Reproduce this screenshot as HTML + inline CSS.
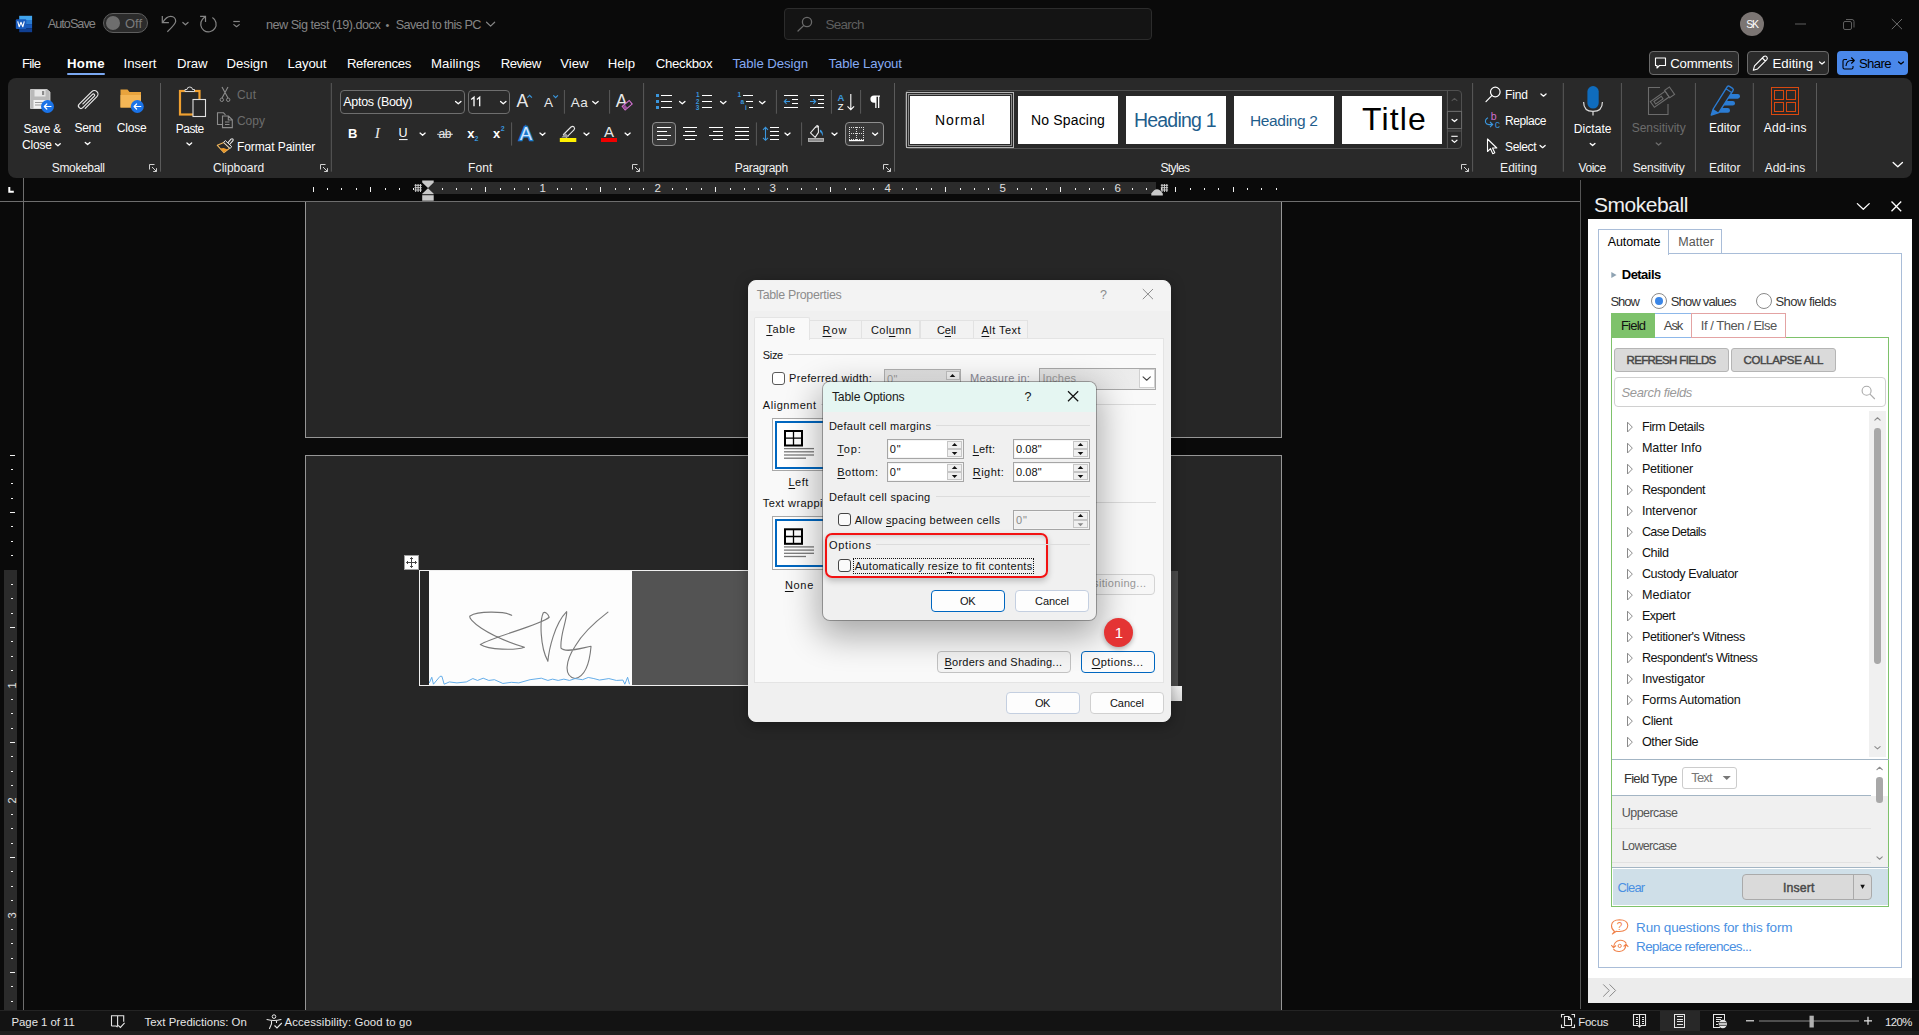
<!DOCTYPE html>
<html><head><meta charset="utf-8"><title>Word</title>
<style>
*{box-sizing:border-box;margin:0;padding:0}
html,body{width:1919px;height:1035px;overflow:hidden;background:#0a0a0a}
body{position:relative;font-family:"Liberation Sans",sans-serif;font-size:13px;color:#fff}
.a{position:absolute}
.t{position:absolute;white-space:nowrap;line-height:1}
svg{overflow:visible}
u{text-decoration-thickness:1px;text-underline-offset:1.5px}
</style></head><body>
<div class="a" style="left:305px;top:201px;width:977px;height:237px;background:#262626;border:1px solid #969696"></div>
<div class="a" style="left:305px;top:455px;width:977px;height:556px;background:#262626;border:1px solid #969696;border-bottom:0"></div>
<div class="a" style="left:428px;top:182px;width:728.3px;height:12px;background:#2b2b2b"></div>
<div class="a" style="left:4px;top:570px;width:13px;height:440px;background:#2b2b2b"></div>
<div class="a" style="left:0px;top:201px;width:1581px;height:1px;background:#6e6e6e"></div>
<div class="a" style="left:23px;top:178px;width:1px;height:832px;background:#6e6e6e"></div>
<div class="a" style="left:1580.3px;top:180px;width:1px;height:829px;background:#555"></div>
<div class="t" style="left:539.50px;top:183.30px;font-size:11.5px;color:#e0e0e0;letter-spacing:0.000px;">1</div>
<div class="t" style="left:654.50px;top:183.30px;font-size:11.5px;color:#e0e0e0;letter-spacing:0.000px;">2</div>
<div class="t" style="left:769.50px;top:183.30px;font-size:11.5px;color:#e0e0e0;letter-spacing:0.000px;">3</div>
<div class="t" style="left:884.50px;top:183.30px;font-size:11.5px;color:#e0e0e0;letter-spacing:0.000px;">4</div>
<div class="t" style="left:999.50px;top:183.30px;font-size:11.5px;color:#e0e0e0;letter-spacing:0.000px;">5</div>
<div class="t" style="left:1114.50px;top:183.30px;font-size:11.5px;color:#e0e0e0;letter-spacing:0.000px;">6</div>
<div class="t" style="left:6px;top:679.5px;width:13px;height:11px;font-size:11px;color:#e0e0e0;transform:rotate(-90deg);text-align:center;line-height:11px">1</div>
<div class="t" style="left:6px;top:794.5px;width:13px;height:11px;font-size:11px;color:#e0e0e0;transform:rotate(-90deg);text-align:center;line-height:11px">2</div>
<div class="t" style="left:6px;top:909.5px;width:13px;height:11px;font-size:11px;color:#e0e0e0;transform:rotate(-90deg);text-align:center;line-height:11px">3</div>
<div class="a" style="left:419px;top:570px;width:759.3px;height:116px;border:1px solid #f0f0f0;border-right:0;background:#535353"></div>
<div class="a" style="left:420px;top:571px;width:9px;height:114px;background:#262626"></div>
<div class="a" style="left:429px;top:571px;width:203px;height:114px;background:#fdfdfd"></div>
<div class="a" style="left:1171px;top:570px;width:8.2px;height:1px;background:#262626"></div>
<div class="a" style="left:1171px;top:571px;width:7.2px;height:115px;background:#4c4c4c"></div>
<div class="a" style="left:1171.4px;top:686px;width:10.4px;height:14.6px;background:linear-gradient(#f4f4f4,#dcdcdc)"></div>
<div class="a" style="left:404px;top:555px;width:15px;height:15px;background:#fff;border:1px solid #a0a0a0"></div>
<div class="a" style="left:0px;top:1009.5px;width:1919px;height:25.5px;background:#131313;border-top:1px solid #242424"></div>
<div class="a" style="left:0px;top:1031px;width:1919px;height:4px;background:#1f1f1f"></div>
<div class="a" style="left:1660px;top:1010.5px;width:40px;height:20.5px;background:#282828"></div>
<div class="t" style="left:11.50px;top:1016.70px;font-size:11.4px;color:#e6e6e6;letter-spacing:-0.042px;">Page 1 of 11</div>
<div class="t" style="left:144.50px;top:1016.70px;font-size:11.4px;color:#e6e6e6;letter-spacing:0.019px;">Text Predictions: On</div>
<div class="t" style="left:284.50px;top:1016.70px;font-size:11.4px;color:#e6e6e6;letter-spacing:0.107px;">Accessibility: Good to go</div>
<div class="t" style="left:1578.20px;top:1016.70px;font-size:11.4px;color:#e6e6e6;letter-spacing:-0.183px;">Focus</div>
<div class="t" style="left:1885.10px;top:1016.70px;font-size:11.4px;color:#e6e6e6;letter-spacing:-0.580px;">120%</div>
<svg class="a" width="1919" height="1035" style="left:0;top:0" fill="none"><path d="M9.3 187 V191.8 H13.8" stroke="#fff" stroke-width="2"/><rect x="327" y="188" width="1" height="2" fill="#f0f0f0"/><rect x="341" y="188" width="1" height="2" fill="#f0f0f0"/><rect x="356" y="188" width="1" height="2" fill="#f0f0f0"/><rect x="370" y="187" width="1" height="5" fill="#f0f0f0"/><rect x="385" y="188" width="1" height="2" fill="#f0f0f0"/><rect x="399" y="188" width="1" height="2" fill="#f0f0f0"/><rect x="413" y="188" width="1" height="2" fill="#f0f0f0"/><rect x="442" y="188" width="1" height="2" fill="#f0f0f0"/><rect x="456" y="188" width="1" height="2" fill="#f0f0f0"/><rect x="471" y="188" width="1" height="2" fill="#f0f0f0"/><rect x="485" y="187" width="1" height="5" fill="#f0f0f0"/><rect x="500" y="188" width="1" height="2" fill="#f0f0f0"/><rect x="514" y="188" width="1" height="2" fill="#f0f0f0"/><rect x="528" y="188" width="1" height="2" fill="#f0f0f0"/><rect x="557" y="188" width="1" height="2" fill="#f0f0f0"/><rect x="571" y="188" width="1" height="2" fill="#f0f0f0"/><rect x="586" y="188" width="1" height="2" fill="#f0f0f0"/><rect x="600" y="187" width="1" height="5" fill="#f0f0f0"/><rect x="615" y="188" width="1" height="2" fill="#f0f0f0"/><rect x="629" y="188" width="1" height="2" fill="#f0f0f0"/><rect x="643" y="188" width="1" height="2" fill="#f0f0f0"/><rect x="672" y="188" width="1" height="2" fill="#f0f0f0"/><rect x="686" y="188" width="1" height="2" fill="#f0f0f0"/><rect x="701" y="188" width="1" height="2" fill="#f0f0f0"/><rect x="715" y="187" width="1" height="5" fill="#f0f0f0"/><rect x="730" y="188" width="1" height="2" fill="#f0f0f0"/><rect x="744" y="188" width="1" height="2" fill="#f0f0f0"/><rect x="758" y="188" width="1" height="2" fill="#f0f0f0"/><rect x="787" y="188" width="1" height="2" fill="#f0f0f0"/><rect x="801" y="188" width="1" height="2" fill="#f0f0f0"/><rect x="816" y="188" width="1" height="2" fill="#f0f0f0"/><rect x="830" y="187" width="1" height="5" fill="#f0f0f0"/><rect x="845" y="188" width="1" height="2" fill="#f0f0f0"/><rect x="859" y="188" width="1" height="2" fill="#f0f0f0"/><rect x="873" y="188" width="1" height="2" fill="#f0f0f0"/><rect x="902" y="188" width="1" height="2" fill="#f0f0f0"/><rect x="916" y="188" width="1" height="2" fill="#f0f0f0"/><rect x="931" y="188" width="1" height="2" fill="#f0f0f0"/><rect x="945" y="187" width="1" height="5" fill="#f0f0f0"/><rect x="960" y="188" width="1" height="2" fill="#f0f0f0"/><rect x="974" y="188" width="1" height="2" fill="#f0f0f0"/><rect x="988" y="188" width="1" height="2" fill="#f0f0f0"/><rect x="1017" y="188" width="1" height="2" fill="#f0f0f0"/><rect x="1031" y="188" width="1" height="2" fill="#f0f0f0"/><rect x="1046" y="188" width="1" height="2" fill="#f0f0f0"/><rect x="1060" y="187" width="1" height="5" fill="#f0f0f0"/><rect x="1075" y="188" width="1" height="2" fill="#f0f0f0"/><rect x="1089" y="188" width="1" height="2" fill="#f0f0f0"/><rect x="1103" y="188" width="1" height="2" fill="#f0f0f0"/><rect x="1132" y="188" width="1" height="2" fill="#f0f0f0"/><rect x="1146" y="188" width="1" height="2" fill="#f0f0f0"/><rect x="1161" y="188" width="1" height="2" fill="#f0f0f0"/><rect x="1175" y="187" width="1" height="5" fill="#f0f0f0"/><rect x="1190" y="188" width="1" height="2" fill="#f0f0f0"/><rect x="1204" y="188" width="1" height="2" fill="#f0f0f0"/><rect x="1218" y="188" width="1" height="2" fill="#f0f0f0"/><rect x="1233" y="187" width="1" height="5" fill="#f0f0f0"/><rect x="1247" y="188" width="1" height="2" fill="#f0f0f0"/><rect x="1261" y="188" width="1" height="2" fill="#f0f0f0"/><rect x="1276" y="188" width="1" height="2" fill="#f0f0f0"/><rect x="313" y="187" width="1" height="5" fill="#f0f0f0"/><path d="M415.7 184 V192 M418.1 184 V192 M420.5 184 V192 M414.5 185.3 H421.8 M414.5 187.7 H421.8 M414.5 190 H421.8" stroke="#cfcfcf" stroke-width="1"/><path d="M1162.0 184 V192 M1164.3999999999999 184 V192 M1166.8 184 V192 M1160.8 185.3 H1168.1 M1160.8 187.7 H1168.1 M1160.8 190 H1168.1" stroke="#cfcfcf" stroke-width="1"/><path d="M422.2 180.5 H433.7 V182.5 L428 188 L422.2 182.5 Z" fill="#c9c9c9"/><path d="M428 188.3 L433.7 193.8 V194.3 H422.2 V193.8 Z" fill="#c9c9c9"/><rect x="422.2" y="195.2" width="11.5" height="5.5" fill="#c9c9c9"/><path d="M1151.3 195.5 V193.5 Q1157 185 1162.8 193.5 V195.5 Z" fill="#c9c9c9"/><rect x="10" y="455" width="5" height="1" fill="#f0f0f0"/><rect x="11" y="469" width="2" height="1" fill="#f0f0f0"/><rect x="11" y="483" width="2" height="1" fill="#f0f0f0"/><rect x="11" y="498" width="2" height="1" fill="#f0f0f0"/><rect x="10" y="512" width="5" height="1" fill="#f0f0f0"/><rect x="11" y="526" width="2" height="1" fill="#f0f0f0"/><rect x="11" y="541" width="2" height="1" fill="#f0f0f0"/><rect x="11" y="555" width="2" height="1" fill="#f0f0f0"/><rect x="11" y="584" width="2" height="1" fill="#f0f0f0"/><rect x="11" y="598" width="2" height="1" fill="#f0f0f0"/><rect x="11" y="613" width="2" height="1" fill="#f0f0f0"/><rect x="10" y="627" width="5" height="1" fill="#f0f0f0"/><rect x="11" y="641" width="2" height="1" fill="#f0f0f0"/><rect x="11" y="656" width="2" height="1" fill="#f0f0f0"/><rect x="11" y="670" width="2" height="1" fill="#f0f0f0"/><rect x="11" y="699" width="2" height="1" fill="#f0f0f0"/><rect x="11" y="713" width="2" height="1" fill="#f0f0f0"/><rect x="11" y="728" width="2" height="1" fill="#f0f0f0"/><rect x="10" y="742" width="5" height="1" fill="#f0f0f0"/><rect x="11" y="756" width="2" height="1" fill="#f0f0f0"/><rect x="11" y="771" width="2" height="1" fill="#f0f0f0"/><rect x="11" y="785" width="2" height="1" fill="#f0f0f0"/><rect x="11" y="814" width="2" height="1" fill="#f0f0f0"/><rect x="11" y="828" width="2" height="1" fill="#f0f0f0"/><rect x="11" y="843" width="2" height="1" fill="#f0f0f0"/><rect x="10" y="857" width="5" height="1" fill="#f0f0f0"/><rect x="11" y="871" width="2" height="1" fill="#f0f0f0"/><rect x="11" y="886" width="2" height="1" fill="#f0f0f0"/><rect x="11" y="900" width="2" height="1" fill="#f0f0f0"/><rect x="11" y="929" width="2" height="1" fill="#f0f0f0"/><rect x="11" y="943" width="2" height="1" fill="#f0f0f0"/><rect x="11" y="958" width="2" height="1" fill="#f0f0f0"/><rect x="10" y="972" width="5" height="1" fill="#f0f0f0"/><rect x="11" y="986" width="2" height="1" fill="#f0f0f0"/><rect x="11" y="1001" width="2" height="1" fill="#f0f0f0"/><path d="M411.5 557.5 V567.5 M406.5 562.5 H416.5 M410 559 L411.5 557.5 L413 559 M410 566 L411.5 567.5 L413 566 M408 561 L406.5 562.5 L408 564 M415 561 L416.5 562.5 L415 564" stroke="#444" stroke-width="1"/><g transform="translate(395 545) scale(0.1876)" stroke="#7a7a7a" stroke-width="6" stroke-linejoin="round" stroke-linecap="round"><path d="M622 375 C580 352 440 352 400 378 C385 395 480 480 690 545 C640 562 500 560 455 530 C520 490 780 425 822 385 C815 368 800 352 790 362 C772 400 772 540 815 620 C820 560 850 420 915 355 C918 400 878 480 885 550 C910 578 1000 548 1045 540 C1040 600 1022 700 960 712 C898 700 908 620 960 540 C1000 470 1080 400 1135 358"/></g><g transform="translate(395 545) scale(0.1876)" stroke="#5aa7e8" stroke-width="5" stroke-linejoin="round"><path d="M183 735 L196 705 L205 742 L240 700 L250 700 L262 742 L290 730 L330 735 L380 730 L415 712 L440 722 L470 710 L500 722 L530 718 L575 738 L620 732 L660 735 L720 718 L780 710 L815 722 L840 715 L870 722 L900 715 L930 722 L960 712 L1000 718 L1030 706 L1060 712 L1090 720 L1140 712 L1180 722 L1215 720 L1225 742 L1240 705 L1250 742"/></g><path d="M111.5 1026 V1015.7 H123.7 V1021.7 M117.6 1015.7 V1026.2 M111.5 1026 H116.2 L117.6 1027.2" stroke="#e6e6e6" stroke-width="1.1"/><path d="M118.2 1025.3 L120.4 1027.4 L124.6 1022.8" stroke="#e6e6e6" stroke-width="1.1"/><circle cx="274" cy="1016.6" r="1.8" stroke="#e6e6e6" stroke-width="1"/><path d="M267 1019.5 Q274 1021.5 281 1019.5 M271.5 1020.5 V1024 L269.5 1028.5 M276.5 1020.5 V1022.5" stroke="#e6e6e6" stroke-width="1.1" stroke-linecap="round"/><path d="M274.5 1025.5 L277 1028 L281.8 1023" stroke="#e6e6e6" stroke-width="1.1"/><path d="M1561.5 1017.5 V1014.5 H1564.5 M1571.5 1014.5 H1574.5 V1017.5 M1574.5 1024.5 V1027.5 H1571.5 M1564.5 1027.5 H1561.5 V1024.5" stroke="#e6e6e6" stroke-width="1.1"/><path d="M1564.5 1016.5 H1568.8 L1571.5 1019.2 V1025.5 H1564.5 Z M1568.5 1016.5 V1019.5 H1571.5" stroke="#e6e6e6" stroke-width="1.1"/><path d="M1633.5 1014.5 H1645.5 V1025.5 H1641 L1639.5 1027 L1638 1025.5 H1633.5 Z M1639.5 1014.5 V1026.5" stroke="#e6e6e6" stroke-width="1.1"/><path d="M1635.5 1017.5 H1637.5 M1635.5 1019.5 H1637.5 M1635.5 1021.5 H1637.5 M1635.5 1023.5 H1637.5 M1641.5 1017.5 H1643.5 M1641.5 1019.5 H1643.5 M1641.5 1021.5 H1643.5 M1641.5 1023.5 H1643.5" stroke="#e6e6e6" stroke-width="1" shape-rendering="crispEdges"/><rect x="1674.5" y="1014.5" width="10" height="13" stroke="#e6e6e6" stroke-width="1.2" shape-rendering="crispEdges"/><path d="M1677 1016.5 H1683 M1677 1019.5 H1683 M1677 1021.5 H1683 M1677 1024.5 H1683" stroke="#e6e6e6" stroke-width="1" shape-rendering="crispEdges"/><path d="M1720 1027.5 H1713.5 V1014.5 H1724.5 V1020" stroke="#e6e6e6" stroke-width="1.2" shape-rendering="crispEdges"/><path d="M1716 1017.5 H1722 M1716 1019.5 H1721 M1716 1021.5 H1719 M1716 1024.5 H1718" stroke="#e6e6e6" stroke-width="1" shape-rendering="crispEdges"/><circle cx="1722.8" cy="1024" r="4.2" fill="#e6e6e6"/><path d="M1719 1022.7 H1726.6 M1719 1025.3 H1726.6" stroke="#131313" stroke-width=".8"/><path d="M1746 1020.8 H1754" stroke="#e6e6e6" stroke-width="1.2"/><path d="M1759 1021 H1859" stroke="#8a8a8a" stroke-width="1"/><rect x="1809.5" y="1015.7" width="4.3" height="11.8" fill="#b0b0b0"/><path d="M1864 1020.8 H1872 M1868 1016.8 V1024.8" stroke="#e6e6e6" stroke-width="1.2"/></svg>
<div class="a" style="left:103px;top:13px;width:45px;height:20px;border:1px solid #5e5e5e;border-radius:10px;background:#2b2b2b"></div>
<div class="a" style="left:106px;top:16px;width:14px;height:14px;border-radius:7px;background:#6e6e6e"></div>
<div class="a" style="left:784px;top:8px;width:368px;height:32px;border:1px solid #2c2c2c;border-radius:4px;background:#141414"></div>
<div class="a" style="left:1740px;top:12px;width:24px;height:24px;border-radius:12px;background:#7b7573"></div>
<div class="t" style="left:47.70px;top:18.30px;font-size:12.7px;color:#858585;letter-spacing:-0.976px;">AutoSave</div>
<div class="t" style="left:125.00px;top:17.30px;font-size:13px;color:#7a7a7a;letter-spacing:-0.055px;">Off</div>
<div class="t" style="left:265.90px;top:18.50px;font-size:12.7px;color:#858585;letter-spacing:-0.506px;">new Sig test (19).docx</div>
<div class="t" style="left:385.50px;top:19.50px;font-size:11px;color:#858585;letter-spacing:0.000px;">•</div>
<div class="t" style="left:395.70px;top:18.50px;font-size:12.7px;color:#858585;letter-spacing:-0.580px;">Saved to this PC</div>
<div class="t" style="left:825.50px;top:18.00px;font-size:13.5px;color:#5e5e5e;letter-spacing:-0.756px;">Search</div>
<div class="t" style="left:1746.30px;top:19.00px;font-size:10.5px;color:#fff;letter-spacing:-1.216px;">SK</div>
<div class="t" style="left:22.00px;top:57.00px;font-size:13.2px;color:#fff;letter-spacing:-0.717px;">File</div>
<div class="t" style="left:123.50px;top:57.00px;font-size:13.2px;color:#fff;letter-spacing:0.003px;">Insert</div>
<div class="t" style="left:177.00px;top:57.00px;font-size:13.2px;color:#fff;letter-spacing:-0.094px;">Draw</div>
<div class="t" style="left:226.50px;top:57.00px;font-size:13.2px;color:#fff;letter-spacing:-0.013px;">Design</div>
<div class="t" style="left:287.50px;top:57.00px;font-size:13.2px;color:#fff;letter-spacing:-0.122px;">Layout</div>
<div class="t" style="left:346.90px;top:57.00px;font-size:13.2px;color:#fff;letter-spacing:-0.339px;">References</div>
<div class="t" style="left:430.90px;top:57.00px;font-size:13.2px;color:#fff;letter-spacing:0.132px;">Mailings</div>
<div class="t" style="left:500.70px;top:57.00px;font-size:13.2px;color:#fff;letter-spacing:-0.550px;">Review</div>
<div class="t" style="left:560.20px;top:57.00px;font-size:13.2px;color:#fff;letter-spacing:-0.020px;">View</div>
<div class="t" style="left:607.70px;top:57.00px;font-size:13.2px;color:#fff;letter-spacing:0.058px;">Help</div>
<div class="t" style="left:655.70px;top:57.00px;font-size:13.2px;color:#fff;letter-spacing:-0.265px;">Checkbox</div>
<div class="t" style="left:67.00px;top:57.00px;font-size:13.2px;color:#fff;letter-spacing:0.286px;font-weight:700;">Home</div>
<div class="a" style="left:67.3px;top:73px;width:37.5px;height:2px;background:#7aa8f2;border-radius:1px"></div>
<div class="t" style="left:732.50px;top:57.00px;font-size:13.2px;color:#86abf3;letter-spacing:-0.068px;">Table Design</div>
<div class="t" style="left:828.50px;top:57.00px;font-size:13.2px;color:#86abf3;letter-spacing:-0.118px;">Table Layout</div>
<div class="a" style="left:1649px;top:51px;width:90px;height:24px;border:1px solid #6b6b6b;border-radius:4px;background:#2b2b2b"></div>
<div class="a" style="left:1747px;top:51px;width:82px;height:24px;border:1px solid #6b6b6b;border-radius:4px;background:#2b2b2b"></div>
<div class="a" style="left:1837px;top:51px;width:71px;height:24px;border-radius:4px;background:#4a88ea"></div>
<div class="t" style="left:1670.20px;top:57.00px;font-size:13.2px;color:#fff;letter-spacing:-0.209px;">Comments</div>
<div class="t" style="left:1772.50px;top:57.00px;font-size:13.2px;color:#fff;letter-spacing:0.029px;">Editing</div>
<div class="t" style="left:1859.00px;top:57.00px;font-size:13.2px;color:#000;letter-spacing:-0.676px;">Share</div>
<svg class="a" width="1919" height="1035" style="left:0;top:0" fill="none"><rect x="19.2" y="15.8" width="12.9" height="4.2" fill="#41a5ee"/><rect x="19.2" y="20" width="12.9" height="4.1" fill="#2b7cd3"/><rect x="19.2" y="24.1" width="12.9" height="4.1" fill="#185abd"/><rect x="19.2" y="28.2" width="12.9" height="4" fill="#103f91"/><rect x="15.8" y="19.2" width="10.5" height="9.7" rx="1" fill="#185abd"/><path d="M17.7 21.4 L19.2 26.8 L21 22.2 L22.8 26.8 L24.3 21.4" stroke="#fff" stroke-width="1.1" stroke-linejoin="round"/><path d="M162.3 16.1 V22.7 H168.9" stroke="#858585" stroke-width="1.2"/><path d="M162.8 22.2 C165 18.5 168 16.3 170.8 16.3 C174 16.3 175.7 18.8 175.7 21.3 C175.7 24 173 26.5 167.3 31.8" stroke="#858585" stroke-width="1.2"/><path d="M182.85 22.45 l2.60 2.30 l2.60 -2.30" stroke="#858585" stroke-width="1.2" stroke-linecap="round" stroke-linejoin="round"/><path d="M200.1 16.3 H205.5 V22" stroke="#858585" stroke-width="1.2"/><path d="M205.3 16.5 L202.4 19.4 A7.7 7.7 0 1 0 212.4 17.6" stroke="#858585" stroke-width="1.2"/><path d="M233.3 21.5 H239.8" stroke="#858585" stroke-width="1.2"/><path d="M233.85 24.65 l2.70 2.10 l2.70 -2.10" stroke="#858585" stroke-width="1.2" stroke-linecap="round" stroke-linejoin="round"/><path d="M486.55 22.25 l4.05 3.90 l4.05 -3.90" stroke="#858585" stroke-width="1.2" stroke-linecap="round" stroke-linejoin="round"/><circle cx="807" cy="22" r="4.6" stroke="#6a6a6a" stroke-width="1.3"/><path d="M803.6 25.6 L798 31" stroke="#6a6a6a" stroke-width="1.3" stroke-linecap="round"/><path d="M1795 24 H1806" stroke="#5e5e5e" stroke-width="1"/><rect x="1843.5" y="21.5" width="8" height="8" rx="1.5" stroke="#5e5e5e" stroke-width="1"/><path d="M1846 19.5 H1852 Q1854 19.5 1854 21.5 V27.5" stroke="#5e5e5e" stroke-width="1"/><path d="M1891.8 19 L1902 29.2 M1902 19 L1891.8 29.2" stroke="#6a6a6a" stroke-width="1"/><path d="M1655.5 58 H1665.5 V65.5 H1659.5 L1657 68 V65.5 H1655.5 Z" stroke="#fff" stroke-width="1.1" stroke-linejoin="round"/><path d="M1753.3 70.3 L1754.5 65.8 L1763.8 56.5 Q1765.3 55.3 1766.8 56.8 Q1768 58.2 1766.8 59.6 L1757.6 68.9 Z M1762.3 58 L1765.3 61" stroke="#fff" stroke-width="1.1" stroke-linejoin="round"/><path d="M1819.55 61.95 l2.45 2.10 l2.45 -2.10" stroke="#fff" stroke-width="1.2" stroke-linecap="round" stroke-linejoin="round"/><path d="M1847 59.5 H1844.5 Q1843 59.5 1843 61 V67.5 Q1843 69 1844.5 69 H1851.5 Q1853 69 1853 67.5 V66" stroke="#000" stroke-width="1.1"/><path d="M1846 66 Q1846.5 60.5 1851 60.5 H1854 M1851.3 57.5 L1854.3 60.5 L1851.3 63.5" stroke="#000" stroke-width="1.1" stroke-linejoin="round"/><path d="M1898.55 61.95 l2.45 2.10 l2.45 -2.10" stroke="#000" stroke-width="1.2" stroke-linecap="round" stroke-linejoin="round"/></svg>
<div class="a" style="left:8px;top:78px;width:1904px;height:100px;background:#292929;border-radius:8px"></div>
<div class="t" style="left:51.80px;top:161.80px;font-size:12px;color:#f2f2f2;letter-spacing:-0.354px;">Smokeball</div>
<div class="t" style="left:213.00px;top:161.80px;font-size:12px;color:#f2f2f2;letter-spacing:-0.034px;">Clipboard</div>
<div class="t" style="left:468.10px;top:161.80px;font-size:12px;color:#f2f2f2;letter-spacing:0.061px;">Font</div>
<div class="t" style="left:734.80px;top:161.80px;font-size:12px;color:#f2f2f2;letter-spacing:-0.343px;">Paragraph</div>
<div class="t" style="left:1160.50px;top:161.80px;font-size:12px;color:#f2f2f2;letter-spacing:-0.637px;">Styles</div>
<div class="t" style="left:1500.10px;top:161.80px;font-size:12px;color:#f2f2f2;letter-spacing:0.033px;">Editing</div>
<div class="t" style="left:1578.50px;top:161.80px;font-size:12px;color:#f2f2f2;letter-spacing:-0.440px;">Voice</div>
<div class="t" style="left:1632.70px;top:161.80px;font-size:12px;color:#f2f2f2;letter-spacing:-0.203px;">Sensitivity</div>
<div class="t" style="left:1709.00px;top:161.80px;font-size:12px;color:#f2f2f2;letter-spacing:0.028px;">Editor</div>
<div class="t" style="left:1764.70px;top:161.80px;font-size:12px;color:#f2f2f2;letter-spacing:-0.031px;">Add-ins</div>
<div class="t" style="left:23.50px;top:122.70px;font-size:12px;color:#fff;letter-spacing:-0.181px;">Save &amp;</div>
<div class="t" style="left:22.00px;top:139.00px;font-size:12px;color:#fff;letter-spacing:-0.197px;">Close</div>
<div class="t" style="left:74.50px;top:122.20px;font-size:12px;color:#fff;letter-spacing:-0.344px;">Send</div>
<div class="t" style="left:116.80px;top:122.20px;font-size:12px;color:#fff;letter-spacing:-0.172px;">Close</div>
<div class="t" style="left:175.80px;top:122.70px;font-size:12px;color:#fff;letter-spacing:-0.547px;">Paste</div>
<div class="t" style="left:236.90px;top:89.00px;font-size:12px;color:#6c6c6c;letter-spacing:0.306px;">Cut</div>
<div class="t" style="left:236.90px;top:115.00px;font-size:12px;color:#6c6c6c;letter-spacing:0.028px;">Copy</div>
<div class="t" style="left:236.90px;top:141.00px;font-size:12px;color:#fff;letter-spacing:-0.074px;">Format Painter</div>
<div class="a" style="left:340.3px;top:90.2px;width:124.4px;height:23.5px;border:1px solid #6e6e6e;border-radius:4px"></div>
<div class="a" style="left:467.5px;top:90.2px;width:42.3px;height:23.5px;border:1px solid #6e6e6e;border-radius:4px"></div>
<div class="t" style="left:343.30px;top:96.20px;font-size:12.5px;color:#fff;letter-spacing:-0.288px;">Aptos (Body)</div>
<div class="t" style="left:516.50px;top:93.00px;font-size:17.5px;color:#e8e8e8;letter-spacing:0.000px;">A</div>
<div class="t" style="left:544.10px;top:96.00px;font-size:13.5px;color:#e8e8e8;letter-spacing:0.000px;">A</div>
<div class="t" style="left:570.80px;top:96.00px;font-size:13.5px;color:#e8e8e8;letter-spacing:0.484px;">Aa</div>
<div class="t" style="left:615.70px;top:93.00px;font-size:17.5px;color:#e8e8e8;letter-spacing:0.000px;">A</div>
<div class="t" style="left:348.10px;top:126.70px;font-size:13px;color:#fff;letter-spacing:0.000px;font-weight:700;">B</div>
<div class="t" style="left:374.70px;top:125.20px;font-size:15.5px;color:#e8e8e8;letter-spacing:0.000px;font-style:italic;font-family:'Liberation Serif',serif;">I</div>
<div class="t" style="left:398.50px;top:127.20px;font-size:12.5px;color:#fff;letter-spacing:0.000px;">U</div>
<div class="t" style="left:438.50px;top:127.70px;font-size:12px;color:#e8e8e8;letter-spacing:-0.359px;">ab</div>
<div class="t" style="left:467.30px;top:126.70px;font-size:13px;color:#fff;letter-spacing:0.000px;font-weight:700;">x</div>
<div class="t" style="left:474.50px;top:135.00px;font-size:7px;color:#3a96dd;letter-spacing:0.000px;font-weight:700;">2</div>
<div class="t" style="left:492.90px;top:126.70px;font-size:13px;color:#fff;letter-spacing:0.000px;font-weight:700;">x</div>
<div class="t" style="left:500.80px;top:124.90px;font-size:7px;color:#3a96dd;letter-spacing:0.000px;font-weight:700;">2</div>
<div class="t" style="left:519.70px;top:124.60px;font-size:18.5px;color:#cfe6ff;letter-spacing:0.000px;-webkit-text-stroke:2.6px #1f7bd0;paint-order:stroke fill;">A</div>
<div class="t" style="left:604.00px;top:123.80px;font-size:15px;color:#e8e8e8;letter-spacing:0.000px;">A</div>
<div class="t" style="left:696.00px;top:92.30px;font-size:6.5px;color:#3a96dd;letter-spacing:0.000px;font-weight:700;">1</div>
<div class="t" style="left:695.80px;top:98.70px;font-size:6.5px;color:#3a96dd;letter-spacing:0.000px;font-weight:700;">2</div>
<div class="t" style="left:695.80px;top:105.00px;font-size:6.5px;color:#3a96dd;letter-spacing:0.000px;font-weight:700;">3</div>
<div class="t" style="left:737.50px;top:92.00px;font-size:6.5px;color:#3a96dd;letter-spacing:0.000px;font-weight:700;">1</div>
<div class="t" style="left:740.50px;top:98.50px;font-size:6.5px;color:#3a96dd;letter-spacing:0.000px;font-weight:700;">a</div>
<div class="t" style="left:745.00px;top:105.00px;font-size:6.5px;color:#3a96dd;letter-spacing:0.000px;font-weight:700;">i</div>
<div class="t" style="left:837.50px;top:93.00px;font-size:9.5px;color:#3a96dd;letter-spacing:0.000px;font-weight:700;">A</div>
<div class="t" style="left:837.80px;top:102.00px;font-size:9.5px;color:#fff;letter-spacing:0.000px;">Z</div>
<div class="a" style="left:652px;top:122px;width:24px;height:24px;border:1px solid #8e8e8e;border-radius:4px;background:#383838"></div>
<div class="a" style="left:845px;top:122px;width:39px;height:24px;border:1px solid #8e8e8e;border-radius:4px;background:#383838"></div>
<div class="a" style="left:905px;top:90.3px;width:557px;height:58.8px;border:1px solid #4f4f4f;border-radius:4px"></div>
<div class="a" style="left:906.3px;top:92.2px;width:107.5px;height:55.8px;border:1px solid #b4b4b4;box-shadow:inset 0 0 0 1px #292929,inset 0 0 0 2px #8a8a8a"></div>
<div class="a" style="left:910px;top:96px;width:100px;height:48px;background:#fff"></div>
<div class="a" style="left:1018px;top:96px;width:100px;height:48px;background:#fff"></div>
<div class="a" style="left:1126px;top:96px;width:100px;height:48px;background:#fff"></div>
<div class="a" style="left:1234px;top:96px;width:100px;height:48px;background:#fff"></div>
<div class="a" style="left:1342px;top:96px;width:100px;height:48px;background:#fff"></div>
<div class="t" style="left:935.00px;top:113.00px;font-size:14px;color:#000;letter-spacing:0.875px;">Normal</div>
<div class="t" style="left:1030.90px;top:113.00px;font-size:14px;color:#000;letter-spacing:0.179px;">No Spacing</div>
<div class="t" style="left:1134.00px;top:111.00px;font-size:19.5px;color:#1f5e8c;letter-spacing:-0.801px;">Heading 1</div>
<div class="t" style="left:1249.90px;top:113.20px;font-size:15.5px;color:#1f5e8c;letter-spacing:-0.321px;">Heading 2</div>
<div class="t" style="left:1361.90px;top:103.00px;font-size:32px;color:#000;letter-spacing:1.159px;">Title</div>
<div class="t" style="left:1505.00px;top:89.00px;font-size:12px;color:#fff;letter-spacing:-0.115px;">Find</div>
<div class="t" style="left:1490.70px;top:110.80px;font-size:10.5px;color:#d070d0;letter-spacing:0.000px;">b</div>
<div class="t" style="left:1494.70px;top:119.00px;font-size:10.5px;color:#3a96dd;letter-spacing:0.000px;">c</div>
<div class="t" style="left:1505.00px;top:115.00px;font-size:12px;color:#fff;letter-spacing:-0.422px;">Replace</div>
<div class="t" style="left:1505.00px;top:141.00px;font-size:12px;color:#fff;letter-spacing:-0.372px;">Select</div>
<div class="t" style="left:1573.70px;top:122.90px;font-size:12px;color:#fff;letter-spacing:0.073px;">Dictate</div>
<div class="t" style="left:1631.70px;top:122.00px;font-size:12px;color:#6c6c6c;letter-spacing:-0.003px;">Sensitivity</div>
<div class="t" style="left:1709.00px;top:122.00px;font-size:12px;color:#fff;letter-spacing:0.028px;">Editor</div>
<div class="t" style="left:1763.70px;top:122.00px;font-size:12px;color:#fff;letter-spacing:0.352px;">Add-ins</div>
<svg class="a" width="1919" height="1035" style="left:0;top:0" fill="none"><path d="M160.5 83 V171.7" stroke="#5a5a5a" stroke-width="1"/><path d="M331.3 83 V171.7" stroke="#5a5a5a" stroke-width="1"/><path d="M643.6 83 V171.7" stroke="#5a5a5a" stroke-width="1"/><path d="M894.5 83 V171.7" stroke="#5a5a5a" stroke-width="1"/><path d="M1472.6 83 V171.7" stroke="#5a5a5a" stroke-width="1"/><path d="M1563.3 83 V171.7" stroke="#5a5a5a" stroke-width="1"/><path d="M1621.4 83 V171.7" stroke="#5a5a5a" stroke-width="1"/><path d="M1695.4 83 V171.7" stroke="#5a5a5a" stroke-width="1"/><path d="M1753.3 83 V171.7" stroke="#5a5a5a" stroke-width="1"/><path d="M1816.5 83 V171.7" stroke="#5a5a5a" stroke-width="1"/><path d="M149.5 169.5 V164.5 H154.5" stroke="#d0d0d0" stroke-width="1"/><path d="M152 167 L156.5 171.5 M153.2 171.5 H156.5 V168.2" stroke="#d0d0d0" stroke-width="1"/><path d="M320.5 169.5 V164.5 H325.5" stroke="#d0d0d0" stroke-width="1"/><path d="M323 167 L327.5 171.5 M324.2 171.5 H327.5 V168.2" stroke="#d0d0d0" stroke-width="1"/><path d="M632.5 169.5 V164.5 H637.5" stroke="#d0d0d0" stroke-width="1"/><path d="M635 167 L639.5 171.5 M636.2 171.5 H639.5 V168.2" stroke="#d0d0d0" stroke-width="1"/><path d="M883.5 169.5 V164.5 H888.5" stroke="#d0d0d0" stroke-width="1"/><path d="M886 167 L890.5 171.5 M887.2 171.5 H890.5 V168.2" stroke="#d0d0d0" stroke-width="1"/><path d="M1461.5 169.5 V164.5 H1466.5" stroke="#d0d0d0" stroke-width="1"/><path d="M1464 167 L1468.5 171.5 M1465.2 171.5 H1468.5 V168.2" stroke="#d0d0d0" stroke-width="1"/><path d="M30.5 89.5 H47 L50 92 V108.5 H30.5 Z" fill="#b9b9b9" stroke="#d8d8d8" stroke-width=".8"/><rect x="34.5" y="90" width="11" height="6.5" fill="#e6e6e6"/><rect x="42" y="91" width="2.2" height="4" fill="#8a8a8a"/><rect x="33.5" y="100" width="13" height="8.5" fill="#f2f2f2"/><path d="M35 102.5 H45 M35 105 H45" stroke="#9a9a9a" stroke-width="1"/><circle cx="47.5" cy="106.5" r="6.5" fill="#1a73e8"/><path d="M51 106.5 H44.3 M46.8 104 L44.3 106.5 L46.8 109" stroke="#fff" stroke-width="1.2" stroke-linecap="round" stroke-linejoin="round"/><path d="M55.55 143.65 l2.35 2.10 l2.35 -2.10" stroke="#fff" stroke-width="1.3" stroke-linecap="round" stroke-linejoin="round"/><g transform="rotate(-45 88.2 100.4)" stroke="#e8e8e8" stroke-width="1.2" stroke-linecap="round"><path d="M80.5 103.9 H97 A3.6 3.6 0 0 0 97 96.7 H79.2 A2.5 2.5 0 0 0 79.2 101.7 H95.5 A1.3 1.3 0 0 0 95.5 99.1 H82"/></g><path d="M85.25 142.45 l2.35 2.10 l2.35 -2.10" stroke="#fff" stroke-width="1.3" stroke-linecap="round" stroke-linejoin="round"/><path d="M120.5 89.5 H127.5 L129.5 92 H141 V107.5 H120.5 Z" fill="#e8a33d"/><path d="M120.5 95 H141 V107.5 H120.5 Z" fill="#f4b656"/><circle cx="137.3" cy="106.5" r="6.5" fill="#1a73e8"/><path d="M140.8 106.5 H134.1 M136.6 104 L134.1 106.5 L136.6 109" stroke="#fff" stroke-width="1.2" stroke-linecap="round" stroke-linejoin="round"/><rect x="180" y="91" width="19.5" height="23.5" stroke="#f0a030" stroke-width="2.2"/><path d="M185 91.5 V89.5 H187 Q187 87 189.8 87 Q192.5 87 192.5 89.5 H194.5 V91.5 Z" fill="#292929" stroke="#d8d8d8" stroke-width="1"/><rect x="193" y="99.5" width="12.5" height="17" fill="#292929" stroke="#e0e0e0" stroke-width="1.1"/><path d="M186.95 142.95 l2.35 2.10 l2.35 -2.10" stroke="#fff" stroke-width="1.3" stroke-linecap="round" stroke-linejoin="round"/><path d="M222 87 L228 98 M228 87 L222 98" stroke="#8c8c8c" stroke-width="1.1"/><circle cx="221.8" cy="99.8" r="1.7" stroke="#8c8c8c" stroke-width="1"/><circle cx="228.2" cy="99.8" r="1.7" stroke="#8c8c8c" stroke-width="1"/><path d="M222 124.5 H217.5 V112.8 H223.5 L225.5 114.8" stroke="#8c8c8c" stroke-width="1.1"/><path d="M222.5 116 H228.5 L232.3 119.8 V127.6 H222.5 Z M228.3 116 V120 H232.3" stroke="#8c8c8c" stroke-width="1.1"/><path d="M225 122 H229.5 M225 124.5 H229.5" stroke="#8c8c8c" stroke-width="1"/><path d="M223.8 142.6 L217.3 145.3 L224 152.6 L229.5 148.2 Z" stroke="#f2b65a" stroke-width="1.1" fill="#292929" stroke-linejoin="round"/><path d="M220.2 148.4 L224 152.3 L227.5 149.5 L223.6 148 Z" fill="#f09a28"/><path d="M227.8 142.8 L231 139.2 Q232 138.3 232.9 139.1 Q233.6 140 232.8 140.9 L229.5 144.5" stroke="#e8e8e8" stroke-width="1.1" fill="#292929"/><path d="M223.6 142.3 L225.4 140.6 L231.8 146.7 L230 148.4 Z" stroke="#e8e8e8" stroke-width="1" fill="#292929" stroke-linejoin="round"/><path d="M471.2 99.4 L474 97.2 V106.2 M476.9 99.4 L479.7 97.2 V106.2" stroke="#fff" stroke-width="1.3" stroke-linejoin="miter"/><path d="M455.55 101.45 l2.70 2.30 l2.70 -2.30" stroke="#fff" stroke-width="1.3" stroke-linecap="round" stroke-linejoin="round"/><path d="M500.55 101.45 l2.70 2.30 l2.70 -2.30" stroke="#fff" stroke-width="1.3" stroke-linecap="round" stroke-linejoin="round"/><path d="M527.3 97.6 L529.6 95.4 L531.9 97.6" stroke="#3a96dd" stroke-width="1.2"/><path d="M553.3 95.4 L555.6 97.6 L557.9 95.4" stroke="#3a96dd" stroke-width="1.2"/><path d="M564.4 90 V113.7 M609.6 90 V113.7 M511.6 122.4 V145.6" stroke="#5a5a5a" stroke-width="1"/><path d="M592.75 101.45 l2.70 2.30 l2.70 -2.30" stroke="#fff" stroke-width="1.3" stroke-linecap="round" stroke-linejoin="round"/><g transform="rotate(-40 627.2 105.2)"><rect x="622.6" y="102.9" width="9.2" height="4.6" stroke="#d070d0" stroke-width="1.1" fill="#292929"/><rect x="623.2" y="103.4" width="2.6" height="3.6" fill="#9a4e9a"/></g><path d="M399 139.6 H407.6" stroke="#fff" stroke-width="1"/><path d="M420.05 133.05 l2.55 2.20 l2.55 -2.20" stroke="#fff" stroke-width="1.3" stroke-linecap="round" stroke-linejoin="round"/><path d="M437.2 134.3 H452.8" stroke="#e8e8e8" stroke-width="1"/><path d="M539.95 133.05 l2.55 2.20 l2.55 -2.20" stroke="#fff" stroke-width="1.3" stroke-linecap="round" stroke-linejoin="round"/><path d="M563.5 134.5 L571 127 Q572.6 125.6 574 127 Q575.3 128.4 574 130 L566.5 137.3 Z" stroke="#e8e8e8" stroke-width="1.1"/><path d="M561.3 137.6 L565.2 133 L569 136.6 L566.5 137.6 Z" fill="#9c9c9c"/><rect x="559.8" y="138" width="16.5" height="4" fill="#fff100"/><path d="M583.95 133.05 l2.55 2.20 l2.55 -2.20" stroke="#fff" stroke-width="1.3" stroke-linecap="round" stroke-linejoin="round"/><rect x="601" y="138" width="16" height="4" fill="#f10000"/><path d="M625.05 133.05 l2.55 2.20 l2.55 -2.20" stroke="#fff" stroke-width="1.3" stroke-linecap="round" stroke-linejoin="round"/><rect x="656" y="94.0" width="3" height="3" fill="#3a96dd"/><path d="M661 95.5 H671.5" stroke="#fff" stroke-width="1" shape-rendering="crispEdges"/><rect x="656" y="100.0" width="3" height="3" fill="#3a96dd"/><path d="M661 101.5 H671.5" stroke="#fff" stroke-width="1" shape-rendering="crispEdges"/><rect x="656" y="106.0" width="3" height="3" fill="#3a96dd"/><path d="M661 107.5 H671.5" stroke="#fff" stroke-width="1" shape-rendering="crispEdges"/><path d="M679.55 101.45 l2.70 2.30 l2.70 -2.30" stroke="#fff" stroke-width="1.3" stroke-linecap="round" stroke-linejoin="round"/><path d="M701.5 95.5 H711.8" stroke="#fff" stroke-width="1" shape-rendering="crispEdges"/><path d="M701.5 101.5 H711.8" stroke="#fff" stroke-width="1" shape-rendering="crispEdges"/><path d="M701.5 107.5 H711.8" stroke="#fff" stroke-width="1" shape-rendering="crispEdges"/><path d="M720.55 101.45 l2.70 2.30 l2.70 -2.30" stroke="#fff" stroke-width="1.3" stroke-linecap="round" stroke-linejoin="round"/><path d="M743 95.5 H753 M746 101.5 H753 M749 107.5 H753" stroke="#fff" stroke-width="1" shape-rendering="crispEdges"/><path d="M759.55 101.45 l2.70 2.30 l2.70 -2.30" stroke="#fff" stroke-width="1.3" stroke-linecap="round" stroke-linejoin="round"/><path d="M776.4 90 V113.7 M831.4 90 V113.7 M860.6 90 V113.7 M756.4 122.4 V145.6 M801.6 122.4 V145.6" stroke="#5a5a5a" stroke-width="1"/><path d="M784 95.5 H798 M792 99.5 H798 M792 103.5 H798 M784 107.5 H798" stroke="#fff" stroke-width="1" shape-rendering="crispEdges"/><path d="M790 101.5 H784.3 M786.6 99.2 L784.3 101.5 L786.6 103.8" stroke="#3a96dd" stroke-width="1.1"/><path d="M810 95.5 H824 M818 99.5 H824 M818 103.5 H824 M810 107.5 H824" stroke="#fff" stroke-width="1" shape-rendering="crispEdges"/><path d="M810 101.5 H815.6 M813.3 99.2 L815.6 101.5 L813.3 103.8" stroke="#3a96dd" stroke-width="1.1"/><path d="M850.8 94 V109.5 M847.5 106.3 L850.8 109.7 L854.1 106.3" stroke="#fff" stroke-width="1.1"/><path d="M880 95.5 H874 A3.6 3.6 0 0 0 874 102.7 H875.2 V108 H876.5 V96.8 H878 V108 H879.3 V96.8 H880 Z" fill="#fff"/><path d="M657 127.5 H671" stroke="#fff" stroke-width="1" shape-rendering="crispEdges"/><path d="M657 135.5 H671" stroke="#fff" stroke-width="1" shape-rendering="crispEdges"/><path d="M657 131.5 H667" stroke="#fff" stroke-width="1" shape-rendering="crispEdges"/><path d="M657 139.5 H667" stroke="#fff" stroke-width="1" shape-rendering="crispEdges"/><path d="M683 127.5 H697" stroke="#fff" stroke-width="1" shape-rendering="crispEdges"/><path d="M683 135.5 H697" stroke="#fff" stroke-width="1" shape-rendering="crispEdges"/><path d="M685 131.5 H695" stroke="#fff" stroke-width="1" shape-rendering="crispEdges"/><path d="M685 139.5 H695" stroke="#fff" stroke-width="1" shape-rendering="crispEdges"/><path d="M709 127.5 H723" stroke="#fff" stroke-width="1" shape-rendering="crispEdges"/><path d="M709 135.5 H723" stroke="#fff" stroke-width="1" shape-rendering="crispEdges"/><path d="M713 131.5 H723" stroke="#fff" stroke-width="1" shape-rendering="crispEdges"/><path d="M713 139.5 H723" stroke="#fff" stroke-width="1" shape-rendering="crispEdges"/><path d="M735 127.5 H749" stroke="#fff" stroke-width="1" shape-rendering="crispEdges"/><path d="M735 131.5 H749" stroke="#fff" stroke-width="1" shape-rendering="crispEdges"/><path d="M735 135.5 H749" stroke="#fff" stroke-width="1" shape-rendering="crispEdges"/><path d="M735 139.5 H749" stroke="#fff" stroke-width="1" shape-rendering="crispEdges"/><path d="M770 127.5 H779" stroke="#fff" stroke-width="1" shape-rendering="crispEdges"/><path d="M770 131.5 H779" stroke="#fff" stroke-width="1" shape-rendering="crispEdges"/><path d="M770 135.5 H779" stroke="#fff" stroke-width="1" shape-rendering="crispEdges"/><path d="M770 139.5 H779" stroke="#fff" stroke-width="1" shape-rendering="crispEdges"/><path d="M765.5 127.3 V140.3 M763 129.8 L765.5 127.3 L768 129.8 M763 137.8 L765.5 140.3 L768 137.8" stroke="#3a96dd" stroke-width="1.1"/><path d="M784.95 133.05 l2.55 2.20 l2.55 -2.20" stroke="#fff" stroke-width="1.3" stroke-linecap="round" stroke-linejoin="round"/><path d="M810.5 132.8 L815.2 127.4 L818.3 126.3 L818.5 132.4 L815.2 137.4 Z" stroke="#e8e8e8" stroke-width="1.1" stroke-linejoin="round"/><path d="M815.4 127.6 Q816 125.4 817.2 125.4 Q818.4 125.4 818.4 127" stroke="#e8e8e8" stroke-width="1"/><path d="M819.9 129.4 Q823.6 130.8 822.7 136.2 Q821.6 132.6 819.9 131.8 Z" fill="#3a96dd"/><rect x="808.5" y="138.5" width="15" height="3" fill="#8c8c8c" stroke="#c4c4c4" stroke-width=".8"/><path d="M831.95 133.05 l2.55 2.20 l2.55 -2.20" stroke="#fff" stroke-width="1.3" stroke-linecap="round" stroke-linejoin="round"/><g fill="#e0e0e0" shape-rendering="crispEdges"><rect x="849" y="127" width="1" height="1"/><rect x="849" y="133" width="1" height="1"/><rect x="849" y="139" width="1" height="1"/><rect x="851" y="127" width="1" height="1"/><rect x="851" y="133" width="1" height="1"/><rect x="851" y="139" width="1" height="1"/><rect x="853" y="127" width="1" height="1"/><rect x="853" y="133" width="1" height="1"/><rect x="853" y="139" width="1" height="1"/><rect x="855" y="127" width="1" height="1"/><rect x="855" y="133" width="1" height="1"/><rect x="855" y="139" width="1" height="1"/><rect x="857" y="127" width="1" height="1"/><rect x="857" y="133" width="1" height="1"/><rect x="857" y="139" width="1" height="1"/><rect x="859" y="127" width="1" height="1"/><rect x="859" y="133" width="1" height="1"/><rect x="859" y="139" width="1" height="1"/><rect x="861" y="127" width="1" height="1"/><rect x="861" y="133" width="1" height="1"/><rect x="861" y="139" width="1" height="1"/><rect x="863" y="127" width="1" height="1"/><rect x="863" y="133" width="1" height="1"/><rect x="863" y="139" width="1" height="1"/><rect x="849" y="127" width="1" height="1"/><rect x="856" y="127" width="1" height="1"/><rect x="863" y="127" width="1" height="1"/><rect x="849" y="129" width="1" height="1"/><rect x="856" y="129" width="1" height="1"/><rect x="863" y="129" width="1" height="1"/><rect x="849" y="131" width="1" height="1"/><rect x="856" y="131" width="1" height="1"/><rect x="863" y="131" width="1" height="1"/><rect x="849" y="133" width="1" height="1"/><rect x="856" y="133" width="1" height="1"/><rect x="863" y="133" width="1" height="1"/><rect x="849" y="135" width="1" height="1"/><rect x="856" y="135" width="1" height="1"/><rect x="863" y="135" width="1" height="1"/><rect x="849" y="137" width="1" height="1"/><rect x="856" y="137" width="1" height="1"/><rect x="863" y="137" width="1" height="1"/><rect x="849" y="139" width="1" height="1"/><rect x="856" y="139" width="1" height="1"/><rect x="863" y="139" width="1" height="1"/></g><rect x="849" y="140" width="15" height="1.2" fill="#fff"/><path d="M872.55 133.05 l2.55 2.20 l2.55 -2.20" stroke="#fff" stroke-width="1.3" stroke-linecap="round" stroke-linejoin="round"/><path d="M1447.4 90.8 V148.6 M1447.4 111.4 H1461.5 M1447.4 128.6 H1461.5 M1447.4 131 H1461.5" stroke="#555" stroke-width="1"/><rect x="1447.4" y="111.4" width="14.2" height="17.2" stroke="#6a6a6a" stroke-width="1"/><path d="M1452.05 100.55 l2.45 -2.10 l2.45 2.10" stroke="#555" stroke-width="1.1" stroke-linecap="round" stroke-linejoin="round"/><path d="M1452.05 119.45 l2.45 2.10 l2.45 -2.10" stroke="#fff" stroke-width="1.2" stroke-linecap="round" stroke-linejoin="round"/><path d="M1452.05 140.25 l2.45 2.10 l2.45 -2.10" stroke="#fff" stroke-width="1.2" stroke-linecap="round" stroke-linejoin="round"/><path d="M1451.3 136.3 H1457.7" stroke="#fff" stroke-width="1.1"/><circle cx="1495.3" cy="92" r="4.8" stroke="#fff" stroke-width="1.2"/><path d="M1491.8 95.7 L1486 101.6" stroke="#fff" stroke-width="1.2" stroke-linecap="round"/><path d="M1540.95 93.95 l2.55 2.20 l2.55 -2.20" stroke="#fff" stroke-width="1.3" stroke-linecap="round" stroke-linejoin="round"/><path d="M1488 117.8 Q1484.8 119.5 1485.6 122.5 Q1486.3 124.6 1489 124.6 H1492.3 M1490 122 L1492.7 124.6 L1490 127.2" stroke="#3a96dd" stroke-width="1.1"/><path d="M1487.5 139 V151.5 L1490.5 148.7 L1492.8 153.7 L1494.8 152.8 L1492.5 148 H1496.8 Z" stroke="#fff" stroke-width="1.1" stroke-linejoin="round"/><path d="M1540.05 145.45 l2.55 2.20 l2.55 -2.20" stroke="#fff" stroke-width="1.3" stroke-linecap="round" stroke-linejoin="round"/><rect x="1587.4" y="86" width="11.3" height="22.6" rx="5.6" fill="#0f6cbd"/><path d="M1583.6 102 Q1583.6 111.4 1593 111.4 Q1602.4 111.4 1602.4 102 M1593 111.4 V115.5" stroke="#dcdcdc" stroke-width="1.2"/><path d="M1590.25 143.45 l2.35 2.10 l2.35 -2.10" stroke="#fff" stroke-width="1.3" stroke-linecap="round" stroke-linejoin="round"/><path d="M1660 87.5 H1648.5 V114.5 H1668 V104" stroke="#6c6c6c" stroke-width="1.1"/><g transform="rotate(-35 1663 97)" stroke="#6c6c6c" stroke-width="1.1"><rect x="1650" y="93.5" width="18" height="7"/><rect x="1653" y="95.5" width="9" height="3"/><rect x="1668" y="92.5" width="6" height="9"/></g><path d="M1656.25 142.95 l2.35 2.10 l2.35 -2.10" stroke="#6c6c6c" stroke-width="1.3" stroke-linecap="round" stroke-linejoin="round"/><rect x="1724" y="94" width="16" height="4.7" rx="2.35" fill="#2b7cd3"/><rect x="1720" y="101" width="15" height="4.6" rx="2.3" fill="#2b7cd3"/><rect x="1716" y="108.1" width="14" height="4.6" rx="2.3" fill="#2b7cd3"/><path d="M1711.3 115 L1713.2 109 L1727.3 86.7 Q1728.2 85.5 1729.5 86.3 L1732.6 88.4 Q1733.8 89.3 1733 90.6 L1718.8 112.7 Z" fill="#292929" stroke="#2b7cd3" stroke-width="1.4" stroke-linejoin="round"/><path d="M1711.3 115 L1713.2 109 L1718.8 112.7 Z" fill="#2b7cd3"/><path d="M1726 88.8 L1731.6 92.6" stroke="#2b7cd3" stroke-width="1.2"/><g stroke="#d9480f" stroke-width="1" shape-rendering="crispEdges"><rect x="1771.5" y="87.5" width="27" height="27"/><rect x="1774.5" y="90.5" width="9" height="9"/><rect x="1786.5" y="90.5" width="9" height="9"/><rect x="1774.5" y="102.5" width="9" height="9"/><rect x="1786.5" y="102.5" width="9" height="9"/></g><path d="M1893.15 162.45 l4.65 4.30 l4.65 -4.30" stroke="#fff" stroke-width="1.3" stroke-linecap="round" stroke-linejoin="round"/></svg>
<div class="t" style="left:1593.90px;top:194.00px;font-size:21px;color:#f0f0f0;letter-spacing:-0.445px;">Smokeball</div>
<div class="a" style="left:1588px;top:219px;width:324px;height:784px;background:#fff"></div>
<div class="a" style="left:1588px;top:978px;width:324px;height:25px;background:#ececec"></div>
<div class="a" style="left:1598px;top:253px;width:304px;height:715px;border:1px solid #a9bdd8"></div>
<div class="a" style="left:1668px;top:229px;width:54px;height:25px;border:1px solid #a9bdd8"></div>
<div class="a" style="left:1598px;top:229px;width:71px;height:26px;border:1px solid #a9bdd8;border-bottom:0;background:#fff"></div>
<div class="t" style="left:1607.70px;top:236.00px;font-size:12.5px;color:#000;letter-spacing:-0.102px;">Automate</div>
<div class="t" style="left:1678.20px;top:236.00px;font-size:12.5px;color:#555;letter-spacing:0.053px;">Matter</div>
<div class="t" style="left:1621.80px;top:267.80px;font-size:13px;color:#000;letter-spacing:-0.540px;font-weight:700;">Details</div>
<div class="t" style="left:1610.50px;top:295.20px;font-size:13px;color:#333;letter-spacing:-1.077px;">Show</div>
<div class="a" style="left:1650.8px;top:293px;width:16.2px;height:16.2px;border:1px solid #8a8a8a;border-radius:50%;background:#fff"></div>
<div class="a" style="left:1654.9px;top:297.1px;width:8px;height:8px;border-radius:50%;background:#3b86e6"></div>
<div class="t" style="left:1670.70px;top:295.20px;font-size:13px;color:#333;letter-spacing:-0.802px;">Show values</div>
<div class="a" style="left:1755.6px;top:293px;width:16.2px;height:16.2px;border:1px solid #8a8a8a;border-radius:50%;background:#fff"></div>
<div class="t" style="left:1775.50px;top:295.20px;font-size:13px;color:#333;letter-spacing:-0.548px;">Show fields</div>
<div class="a" style="left:1611px;top:337px;width:278px;height:570px;border:1px solid #7ec26b;background:#fff"></div>
<div class="a" style="left:1611px;top:313px;width:44.5px;height:25px;background:#7ec26b"></div>
<div class="a" style="left:1655px;top:313px;width:37px;height:25px;border-top:1px solid #8db8ea;border-bottom:1px solid #8db8ea;background:#fff"></div>
<div class="a" style="left:1691.3px;top:313px;width:94.5px;height:25px;border:1px solid #e3a3a3;background:#fff"></div>
<div class="t" style="left:1620.90px;top:318.50px;font-size:13px;color:#111;letter-spacing:-0.772px;">Field</div>
<div class="t" style="left:1663.80px;top:318.50px;font-size:13px;color:#444;letter-spacing:-1.086px;">Ask</div>
<div class="t" style="left:1700.80px;top:318.50px;font-size:13px;color:#555;letter-spacing:-0.473px;">If / Then / Else</div>
<div class="a" style="left:1614.2px;top:348px;width:114.5px;height:24px;border:1px solid #b5b5b5;border-radius:3px;background:#dadada"></div>
<div class="a" style="left:1731.4px;top:348px;width:104.3px;height:24px;border:1px solid #b5b5b5;border-radius:3px;background:#dadada"></div>
<div class="t" style="left:1626.50px;top:355.30px;font-size:11.5px;color:#484848;letter-spacing:-0.671px;-webkit-text-stroke:.45px #484848;">REFRESH FIELDS</div>
<div class="t" style="left:1743.50px;top:355.30px;font-size:11.5px;color:#484848;letter-spacing:-0.341px;-webkit-text-stroke:.45px #484848;">COLLAPSE ALL</div>
<div class="a" style="left:1614.2px;top:377.4px;width:271.5px;height:29.2px;border:1px solid #d0d0d0;border-radius:4px;background:#fff"></div>
<div class="t" style="left:1621.50px;top:385.60px;font-size:13px;color:#9a9a9a;letter-spacing:-0.363px;font-style:italic;">Search fields</div>
<div class="a" style="left:1869.2px;top:411px;width:16.8px;height:346px;background:#f0f0f0"></div>
<div class="a" style="left:1874.2px;top:428px;width:6.8px;height:235.5px;background:#a8a8a8;border-radius:3.4px"></div>
<div class="t" style="left:1641.90px;top:420.80px;font-size:12.6px;color:#111;letter-spacing:-0.416px;">Firm Details</div>
<div class="t" style="left:1641.90px;top:441.80px;font-size:12.6px;color:#111;letter-spacing:-0.030px;">Matter Info</div>
<div class="t" style="left:1641.90px;top:462.80px;font-size:12.6px;color:#111;letter-spacing:-0.213px;">Petitioner</div>
<div class="t" style="left:1641.90px;top:483.80px;font-size:12.6px;color:#111;letter-spacing:-0.480px;">Respondent</div>
<div class="t" style="left:1641.90px;top:504.80px;font-size:12.6px;color:#111;letter-spacing:-0.156px;">Intervenor</div>
<div class="t" style="left:1641.90px;top:525.80px;font-size:12.6px;color:#111;letter-spacing:-0.637px;">Case Details</div>
<div class="t" style="left:1641.90px;top:546.80px;font-size:12.6px;color:#111;letter-spacing:-0.401px;">Child</div>
<div class="t" style="left:1641.90px;top:567.80px;font-size:12.6px;color:#111;letter-spacing:-0.413px;">Custody Evaluator</div>
<div class="t" style="left:1641.90px;top:588.80px;font-size:12.6px;color:#111;letter-spacing:0.000px;">Mediator</div>
<div class="t" style="left:1641.90px;top:609.80px;font-size:12.6px;color:#111;letter-spacing:-0.541px;">Expert</div>
<div class="t" style="left:1641.90px;top:630.80px;font-size:12.6px;color:#111;letter-spacing:-0.358px;">Petitioner&#x27;s Witness</div>
<div class="t" style="left:1641.90px;top:651.80px;font-size:12.6px;color:#111;letter-spacing:-0.469px;">Respondent&#x27;s Witness</div>
<div class="t" style="left:1641.90px;top:672.80px;font-size:12.6px;color:#111;letter-spacing:-0.192px;">Investigator</div>
<div class="t" style="left:1641.90px;top:693.80px;font-size:12.6px;color:#111;letter-spacing:-0.220px;">Forms Automation</div>
<div class="t" style="left:1641.90px;top:714.80px;font-size:12.6px;color:#111;letter-spacing:-0.321px;">Client</div>
<div class="t" style="left:1641.90px;top:735.80px;font-size:12.6px;color:#111;letter-spacing:-0.389px;">Other Side</div>
<div class="a" style="left:1612px;top:759px;width:276.5px;height:1px;background:#a3b5c4"></div>
<div class="a" style="left:1612px;top:795.3px;width:259px;height:1px;background:#a3b5c4"></div>
<div class="a" style="left:1612px;top:796.3px;width:259px;height:71px;background:#f0f0f0"></div>
<div class="a" style="left:1612px;top:828.2px;width:259px;height:1px;background:#e2e2e2"></div>
<div class="a" style="left:1612px;top:861.5px;width:259px;height:1px;background:#e2e2e2"></div>
<div class="a" style="left:1871px;top:796.3px;width:17px;height:71px;background:#f0f0f0"></div>
<div class="a" style="left:1612px;top:867.4px;width:276.5px;height:1px;background:#a3b5c4"></div>
<div class="t" style="left:1623.90px;top:771.90px;font-size:13px;color:#333;letter-spacing:-0.683px;">Field Type</div>
<div class="a" style="left:1682.3px;top:766.5px;width:54.5px;height:22.2px;border:1px solid #ccc;border-radius:3px;background:#fff"></div>
<div class="t" style="left:1691.30px;top:771.30px;font-size:13px;color:#777;letter-spacing:-0.881px;">Text</div>
<div class="a" style="left:1876.4px;top:777px;width:6.6px;height:26px;background:#a8a8a8;border-radius:3.3px"></div>
<div class="t" style="left:1621.80px;top:806.50px;font-size:12.5px;color:#555;letter-spacing:-0.544px;">Uppercase</div>
<div class="t" style="left:1621.80px;top:839.70px;font-size:12.5px;color:#555;letter-spacing:-0.657px;">Lowercase</div>
<div class="a" style="left:1613px;top:869.3px;width:274.5px;height:35.7px;background:#cfdfe8"></div>
<div class="t" style="left:1617.50px;top:880.60px;font-size:13px;color:#4a90e2;letter-spacing:-0.845px;">Clear</div>
<div class="a" style="left:1742px;top:874.4px;width:129.5px;height:25.2px;border:1px solid #aaa;border-radius:4px;background:#dadada"></div>
<div class="a" style="left:1853px;top:874.9px;width:1px;height:24.2px;background:#aaa"></div>
<div class="t" style="left:1783.00px;top:881.60px;font-size:12.3px;color:#4a4a4a;letter-spacing:0.147px;-webkit-text-stroke:.45px #4a4a4a;">Insert</div>
<div class="t" style="left:1616.80px;top:921.50px;font-size:10px;color:#f0824a;letter-spacing:0.000px;">?</div>
<div class="t" style="left:1636.10px;top:920.50px;font-size:13.5px;color:#4a90e2;letter-spacing:-0.190px;">Run questions for this form</div>
<div class="t" style="left:1636.10px;top:939.80px;font-size:13.5px;color:#4a90e2;letter-spacing:-0.621px;">Replace references...</div>
<svg class="a" width="1919" height="1035" style="left:0;top:0" fill="none"><path d="M1857.35 203.65 l5.95 5.60 l5.95 -5.60" stroke="#fff" stroke-width="1.3" stroke-linecap="round" stroke-linejoin="round"/><path d="M1891.5 201.5 L1901.2 211.3 M1901.2 201.5 L1891.5 211.3" stroke="#fff" stroke-width="1.3"/><path d="M1611.3 272 L1616.6 275 L1611.3 278 Z" fill="#8fa3b3"/><circle cx="1866.6" cy="390.8" r="4.5" stroke="#aaa" stroke-width="1.1"/><path d="M1870 394.2 L1874.8 399" stroke="#aaa" stroke-width="1.1"/><path d="M1874.85 420.05 l2.65 -2.30 l2.65 2.30" stroke="#8a8a8a" stroke-width="1.1" stroke-linecap="round" stroke-linejoin="round"/><path d="M1874.85 746.65 l2.65 2.30 l2.65 -2.30" stroke="#8a8a8a" stroke-width="1.1" stroke-linecap="round" stroke-linejoin="round"/><path d="M1627.5 422.2 V432.0 L1632.3 427.1 Z" stroke="#8a8a8a" stroke-width="1"/><path d="M1627.5 443.2 V453.0 L1632.3 448.1 Z" stroke="#8a8a8a" stroke-width="1"/><path d="M1627.5 464.2 V474.0 L1632.3 469.1 Z" stroke="#8a8a8a" stroke-width="1"/><path d="M1627.5 485.2 V495.0 L1632.3 490.1 Z" stroke="#8a8a8a" stroke-width="1"/><path d="M1627.5 506.19999999999993 V516.0 L1632.3 511.09999999999997 Z" stroke="#8a8a8a" stroke-width="1"/><path d="M1627.5 527.1999999999999 V537.0 L1632.3 532.0999999999999 Z" stroke="#8a8a8a" stroke-width="1"/><path d="M1627.5 548.1999999999999 V558.0 L1632.3 553.0999999999999 Z" stroke="#8a8a8a" stroke-width="1"/><path d="M1627.5 569.1999999999999 V579.0 L1632.3 574.0999999999999 Z" stroke="#8a8a8a" stroke-width="1"/><path d="M1627.5 590.1999999999999 V600.0 L1632.3 595.0999999999999 Z" stroke="#8a8a8a" stroke-width="1"/><path d="M1627.5 611.1999999999999 V621.0 L1632.3 616.0999999999999 Z" stroke="#8a8a8a" stroke-width="1"/><path d="M1627.5 632.1999999999999 V642.0 L1632.3 637.0999999999999 Z" stroke="#8a8a8a" stroke-width="1"/><path d="M1627.5 653.1999999999999 V663.0 L1632.3 658.0999999999999 Z" stroke="#8a8a8a" stroke-width="1"/><path d="M1627.5 674.1999999999999 V684.0 L1632.3 679.0999999999999 Z" stroke="#8a8a8a" stroke-width="1"/><path d="M1627.5 695.1999999999999 V705.0 L1632.3 700.0999999999999 Z" stroke="#8a8a8a" stroke-width="1"/><path d="M1627.5 716.1999999999999 V726.0 L1632.3 721.0999999999999 Z" stroke="#8a8a8a" stroke-width="1"/><path d="M1627.5 737.1999999999999 V747.0 L1632.3 742.0999999999999 Z" stroke="#8a8a8a" stroke-width="1"/><path d="M1722.7 776 H1730.8 L1726.75 780 Z" fill="#777"/><path d="M1876.95 769.55 l2.65 -2.30 l2.65 2.30" stroke="#8a8a8a" stroke-width="1.1" stroke-linecap="round" stroke-linejoin="round"/><path d="M1876.95 856.95 l2.65 2.30 l2.65 -2.30" stroke="#8a8a8a" stroke-width="1.1" stroke-linecap="round" stroke-linejoin="round"/><path d="M1860.3 884.8 H1864.9 L1862.6 889 Z" fill="#111"/><path d="M1614.5 931.5 Q1611.3 929 1611.5 925.5 Q1612 919.8 1619.5 919.7 Q1627.5 919.8 1627.8 925.5 Q1627.5 931.3 1619.5 931.5 Q1617.5 931.5 1616.3 931.2 L1612.3 934 Z" stroke="#f0824a" stroke-width="1.1" stroke-linejoin="round"/><path d="M1613.5 947.5 Q1614 941 1620 940.2 Q1624.5 940 1626.3 943.5 M1611.3 945.2 L1613.5 947.7 L1616 945.5 M1626 944.5 Q1625.5 951 1619.5 951.5 Q1615 951.7 1613.5 949 M1628.3 946.8 L1626 944.3 L1623.6 946.5" stroke="#f0824a" stroke-width="1.1"/><circle cx="1619.7" cy="945.9" r="1.6" stroke="#f0824a" stroke-width="1"/><path d="M1603.2 984.4 L1609.3 990.5 L1603.2 996.6 M1609.5 984.4 L1615.6 990.5 L1609.5 996.6" stroke="#8a8a8a" stroke-width="1"/></svg>
<div class="a" style="left:748px;top:280px;width:423px;height:442px;background:#f0f0f0;border-radius:8px;border:1px solid #f0f0f0;box-shadow:0 3px 14px rgba(0,0,0,.35)"></div>
<div class="a" style="left:749px;top:281px;width:421px;height:29.5px;background:#f3f3f3;border-radius:7px 7px 0 0"></div>
<div class="t" style="left:756.80px;top:288.80px;font-size:12.4px;color:#8c8c8c;letter-spacing:-0.310px;">Table Properties</div>
<div class="t" style="left:1100.10px;top:289.00px;font-size:12.5px;color:#8c8c8c;letter-spacing:0.000px;">?</div>
<div class="a" style="left:809px;top:320px;width:53.299999999999955px;height:19px;border:1px solid #e2e2e2;background:#f2f2f2"></div>
<div class="a" style="left:861.3px;top:320px;width:59.200000000000045px;height:19px;border:1px solid #e2e2e2;background:#f2f2f2"></div>
<div class="a" style="left:919.5px;top:320px;width:54.799999999999955px;height:19px;border:1px solid #e2e2e2;background:#f2f2f2"></div>
<div class="a" style="left:973.3px;top:320px;width:55.100000000000136px;height:19px;border:1px solid #e2e2e2;background:#f2f2f2"></div>
<div class="a" style="left:754px;top:338px;width:409.5px;height:345px;background:#f9f9f9;border:1px solid #e4e4e4"></div>
<div class="a" style="left:754px;top:317px;width:55.5px;height:22.5px;background:#f9f9f9;border:1px solid #e4e4e4;border-bottom:0;border-radius:2px 2px 0 0"></div>
<div class="t" style="left:766.30px;top:324.00px;font-size:11px;color:#111;letter-spacing:0.626px;"><u>T</u>able</div>
<div class="t" style="left:822.50px;top:324.60px;font-size:11px;color:#111;letter-spacing:0.992px;"><u>R</u>ow</div>
<div class="t" style="left:870.90px;top:324.60px;font-size:11px;color:#111;letter-spacing:0.476px;">Col<u>u</u>mn</div>
<div class="t" style="left:936.90px;top:324.60px;font-size:11px;color:#111;letter-spacing:0.010px;">C<u>e</u>ll</div>
<div class="t" style="left:981.50px;top:324.60px;font-size:11px;color:#111;letter-spacing:0.446px;"><u>A</u>lt Text</div>
<div class="t" style="left:762.80px;top:349.70px;font-size:11px;color:#111;letter-spacing:-0.335px;">Size</div>
<div class="a" style="left:788px;top:354.2px;width:368px;height:1px;background:#dcdcdc"></div>
<div class="a" style="left:772px;top:372px;width:13px;height:13px;border:1px solid #5a5a5a;border-radius:3px;background:#fff"></div>
<div class="t" style="left:789.00px;top:373.40px;font-size:11px;color:#111;letter-spacing:0.349px;">Preferred <u>w</u>idth:</div>
<div class="a" style="left:883.9px;top:369.3px;width:77px;height:21px;border:1px solid #b0b0b0;background:linear-gradient(#dedede,#efefef)"></div>
<div class="a" style="left:945.5px;top:371px;width:14px;height:8.5px;border:1px solid #c0c0c0;background:#f0f0f0"></div>
<div class="t" style="left:887.00px;top:374.00px;font-size:11px;color:#9a9a9a;letter-spacing:0.469px;">0&quot;</div>
<div class="t" style="left:970.00px;top:373.40px;font-size:11px;color:#8a8a96;letter-spacing:0.242px;">Measure in:</div>
<div class="a" style="left:1039.2px;top:367.9px;width:117px;height:21.8px;border:1px solid #a8a8a8;background:linear-gradient(90deg,#e2e2e2,#eee)"></div>
<div class="a" style="left:1138.5px;top:369.2px;width:16.5px;height:19.2px;background:#fff;border:1px solid #d0d0d0"></div>
<div class="t" style="left:1042.50px;top:373.40px;font-size:11px;color:#9a9a9a;letter-spacing:0.216px;">Inches</div>
<div class="t" style="left:762.80px;top:399.70px;font-size:11px;color:#111;letter-spacing:0.547px;">Alignment</div>
<div class="a" style="left:821px;top:404.3px;width:335px;height:1px;background:#dcdcdc"></div>
<div class="a" style="left:772px;top:417.9px;width:60px;height:53.6px;border:1px solid #a8a8a8;background:#fff"></div>
<div class="a" style="left:775px;top:421px;width:56px;height:47.5px;border:2px solid #0067c0"></div>
<div class="t" style="left:788.50px;top:476.60px;font-size:11px;color:#111;letter-spacing:0.480px;"><u>L</u>eft</div>
<div class="t" style="left:762.80px;top:497.60px;font-size:11px;color:#111;letter-spacing:0.402px;">Text wrapping</div>
<div class="a" style="left:840px;top:502.3px;width:316px;height:1px;background:#dcdcdc"></div>
<div class="a" style="left:772px;top:516px;width:60px;height:53.9px;border:1px solid #a8a8a8;background:#fff"></div>
<div class="a" style="left:775px;top:519px;width:56px;height:47.7px;border:2px solid #0067c0"></div>
<div class="t" style="left:784.90px;top:580.10px;font-size:11px;color:#111;letter-spacing:0.696px;"><u>N</u>one</div>
<div class="a" style="left:1070.6px;top:573.5px;width:84.2px;height:21px;border:1px solid #d4d4d4;border-radius:4px;background:#f7f7f7"></div>
<div class="t" style="left:1079.00px;top:578.30px;font-size:11px;color:#9a9a9a;letter-spacing:0.317px;">Positioning...</div>
<div class="a" style="left:937.2px;top:651.4px;width:133.5px;height:21.3px;border:1px solid #c2c2c2;border-radius:4px;background:#f4f4f4"></div>
<div class="t" style="left:944.50px;top:657.10px;font-size:11px;color:#111;letter-spacing:0.237px;"><u>B</u>orders and Shading...</div>
<div class="a" style="left:1081px;top:651.4px;width:74px;height:21.3px;border:1.5px solid #0067c0;border-radius:4px;background:#fbfbfb"></div>
<div class="t" style="left:1091.70px;top:657.10px;font-size:11px;color:#111;letter-spacing:0.467px;"><u>O</u>ptions...</div>
<div class="a" style="left:1006px;top:692.2px;width:74px;height:21.5px;border:1px solid #c4cfe0;border-radius:4px;background:#fdfdfd"></div>
<div class="t" style="left:1035.00px;top:697.80px;font-size:11px;color:#111;letter-spacing:-0.506px;">OK</div>
<div class="a" style="left:1090.3px;top:692.2px;width:73.3px;height:21.5px;border:1px solid #d0d0d0;border-radius:4px;background:#fdfdfd"></div>
<div class="t" style="left:1109.90px;top:697.80px;font-size:11px;color:#111;letter-spacing:-0.030px;">Cancel</div>
<svg class="a" width="1919" height="1035" style="left:0;top:0" fill="none"><path d="M1142.8 289 L1153 299.2 M1153 289 L1142.8 299.2" stroke="#8c8c8c" stroke-width="1"/><path d="M949.7 377 H955.3 L952.5 374 Z" fill="#111"/><path d="M1143.05 376.95 l3.65 3.30 l3.65 -3.30" stroke="#444" stroke-width="1.1" stroke-linecap="round" stroke-linejoin="round"/><rect x="785" y="431" width="17" height="14.5" stroke="#000" stroke-width="2"/><path d="M793.5 431 V445.5 M785 438.2 H802" stroke="#000" stroke-width="1.3"/><path d="M784 448.6 H814" stroke="#7a7a7a" stroke-width="1.3"/><path d="M784 451.8 H814" stroke="#7a7a7a" stroke-width="1.3"/><path d="M784 455 H814" stroke="#7a7a7a" stroke-width="1.3"/><path d="M784 458.2 H806" stroke="#7a7a7a" stroke-width="1.3"/><rect x="785" y="529.3" width="17" height="14.5" stroke="#000" stroke-width="2"/><path d="M793.5 529.3 V543.8 M785 536.5 H802" stroke="#000" stroke-width="1.3"/><path d="M784 546.9 H814" stroke="#7a7a7a" stroke-width="1.3"/><path d="M784 550.0999999999999 H814" stroke="#7a7a7a" stroke-width="1.3"/><path d="M784 553.3 H814" stroke="#7a7a7a" stroke-width="1.3"/><path d="M784 556.5 H806" stroke="#7a7a7a" stroke-width="1.3"/></svg>
<div class="a" style="left:822px;top:381px;width:275px;height:240px;background:#f0f0f0;border-radius:8px;border:1px solid rgba(60,60,60,.42);background-clip:padding-box;box-shadow:0 12px 34px 3px rgba(0,0,0,.33);overflow:hidden"><div style="height:29.5px;background:#e5f6f2"></div></div>
<div class="t" style="left:831.90px;top:390.70px;font-size:12.2px;color:#1a1a1a;letter-spacing:-0.144px;">Table Options</div>
<div class="t" style="left:1024.50px;top:391.00px;font-size:12.5px;color:#111;letter-spacing:0.000px;">?</div>
<div class="t" style="left:828.90px;top:420.80px;font-size:11px;color:#111;letter-spacing:0.285px;">Default cell margins</div>
<div class="a" style="left:935.8px;top:425px;width:154px;height:1px;background:#dcdcdc"></div>
<div class="t" style="left:837.30px;top:443.60px;font-size:11px;color:#111;letter-spacing:0.901px;"><u>T</u>op:</div>
<div class="t" style="left:837.30px;top:466.60px;font-size:11px;color:#111;letter-spacing:0.463px;"><u>B</u>ottom:</div>
<div class="t" style="left:972.70px;top:443.60px;font-size:11px;color:#111;letter-spacing:0.220px;"><u>L</u>eft:</div>
<div class="t" style="left:972.70px;top:466.60px;font-size:11px;color:#111;letter-spacing:0.490px;"><u>R</u>ight:</div>
<div class="a" style="left:887px;top:439.3px;width:76.8px;height:19.4px;border:1px solid #a6a6a6;background:#fff;box-shadow:inset 0 0 0 1px #f4f4f4"></div>
<div class="a" style="left:947.0px;top:440.90000000000003px;width:15.2px;height:7.8999999999999995px;border:1px solid #c6c6c6;background:#f0f0f0"></div>
<div class="a" style="left:947.0px;top:449.2px;width:15.2px;height:7.8999999999999995px;border:1px solid #c6c6c6;background:#f0f0f0"></div>
<div class="t" style="left:889.70px;top:443.80px;font-size:11px;color:#111;letter-spacing:0.969px;">0&quot;</div>
<div class="a" style="left:887px;top:462.3px;width:76.8px;height:19.4px;border:1px solid #a6a6a6;background:#fff;box-shadow:inset 0 0 0 1px #f4f4f4"></div>
<div class="a" style="left:947.0px;top:463.90000000000003px;width:15.2px;height:7.8999999999999995px;border:1px solid #c6c6c6;background:#f0f0f0"></div>
<div class="a" style="left:947.0px;top:472.2px;width:15.2px;height:7.8999999999999995px;border:1px solid #c6c6c6;background:#f0f0f0"></div>
<div class="t" style="left:889.70px;top:466.80px;font-size:11px;color:#111;letter-spacing:0.969px;">0&quot;</div>
<div class="a" style="left:1013.2px;top:439.3px;width:76.5px;height:19.4px;border:1px solid #a6a6a6;background:#fff;box-shadow:inset 0 0 0 1px #f4f4f4"></div>
<div class="a" style="left:1072.9px;top:440.90000000000003px;width:15.2px;height:7.8999999999999995px;border:1px solid #c6c6c6;background:#f0f0f0"></div>
<div class="a" style="left:1072.9px;top:449.2px;width:15.2px;height:7.8999999999999995px;border:1px solid #c6c6c6;background:#f0f0f0"></div>
<div class="t" style="left:1015.90px;top:443.80px;font-size:11px;color:#111;letter-spacing:0.118px;">0.08&quot;</div>
<div class="a" style="left:1013.2px;top:462.3px;width:76.5px;height:19.4px;border:1px solid #a6a6a6;background:#fff;box-shadow:inset 0 0 0 1px #f4f4f4"></div>
<div class="a" style="left:1072.9px;top:463.90000000000003px;width:15.2px;height:7.8999999999999995px;border:1px solid #c6c6c6;background:#f0f0f0"></div>
<div class="a" style="left:1072.9px;top:472.2px;width:15.2px;height:7.8999999999999995px;border:1px solid #c6c6c6;background:#f0f0f0"></div>
<div class="t" style="left:1015.90px;top:466.80px;font-size:11px;color:#111;letter-spacing:0.118px;">0.08&quot;</div>
<div class="t" style="left:828.90px;top:492.00px;font-size:11px;color:#111;letter-spacing:0.311px;">Default cell spacing</div>
<div class="a" style="left:935.8px;top:496.2px;width:154px;height:1px;background:#dcdcdc"></div>
<div class="a" style="left:838px;top:513px;width:13px;height:13px;border:1px solid #444;border-radius:3px;background:#fafafa"></div>
<div class="t" style="left:854.70px;top:514.60px;font-size:11px;color:#111;letter-spacing:0.324px;">Allow <u>s</u>pacing between cells</div>
<div class="a" style="left:1013.2px;top:510.4px;width:76.5px;height:19.4px;border:1px solid #a6a6a6;background:#f0f0f0;box-shadow:inset 0 0 0 1px #f4f4f4"></div>
<div class="a" style="left:1072.9px;top:512.0px;width:15.2px;height:7.8999999999999995px;border:1px solid #c6c6c6;background:#f0f0f0"></div>
<div class="a" style="left:1072.9px;top:520.3000000000001px;width:15.2px;height:7.8999999999999995px;border:1px solid #c6c6c6;background:#f0f0f0"></div>
<div class="t" style="left:1015.90px;top:514.90px;font-size:11px;color:#8a8a8a;letter-spacing:0.969px;">0&quot;</div>
<div class="a" style="left:825.4px;top:533.4px;width:222.8px;height:45px;border:2.2px solid #f21212;border-radius:7px;box-shadow:0 3px 6px rgba(0,0,0,.22), inset 0 3px 5px -2px rgba(0,0,0,.18)"></div>
<div class="t" style="left:828.90px;top:539.70px;font-size:11px;color:#111;letter-spacing:0.680px;">Options</div>
<div class="a" style="left:876px;top:544.2px;width:214px;height:1px;background:#dcdcdc"></div>
<div class="a" style="left:838px;top:559.2px;width:13px;height:13px;border:1px solid #444;border-radius:3px;background:#fafafa"></div>
<div class="a" style="left:853px;top:558.3px;width:181px;height:15.8px;border:1px dotted #111"></div>
<div class="t" style="left:854.70px;top:560.50px;font-size:11px;color:#111;letter-spacing:0.320px;">Automatically resi<u>z</u>e to fit contents</div>
<div class="a" style="left:931px;top:590.2px;width:74px;height:21.8px;border:1.5px solid #0067c0;border-radius:4px;background:#fdfdfd"></div>
<div class="t" style="left:960.10px;top:595.70px;font-size:11px;color:#111;letter-spacing:-0.506px;">OK</div>
<div class="a" style="left:1015.2px;top:590.2px;width:73.7px;height:21.8px;border:1px solid #c4cfe0;border-radius:4px;background:#fdfdfd"></div>
<div class="t" style="left:1035.00px;top:595.70px;font-size:11px;color:#111;letter-spacing:-0.050px;">Cancel</div>
<svg class="a" width="1919" height="1035" style="left:0;top:0" fill="none"><path d="M1068 391.2 L1078.2 401.2 M1078.2 391.2 L1068 401.2" stroke="#111" stroke-width="1.2"/><path d="M951.8000000000001 445.90000000000003 H957.4 L954.6 442.90000000000003 Z" fill="#111"/><path d="M951.8000000000001 452.09999999999997 H957.4 L954.6 455.09999999999997 Z" fill="#111"/><path d="M951.8000000000001 468.90000000000003 H957.4 L954.6 465.90000000000003 Z" fill="#111"/><path d="M951.8000000000001 475.09999999999997 H957.4 L954.6 478.09999999999997 Z" fill="#111"/><path d="M1077.7 445.90000000000003 H1083.3 L1080.5 442.90000000000003 Z" fill="#111"/><path d="M1077.7 452.09999999999997 H1083.3 L1080.5 455.09999999999997 Z" fill="#111"/><path d="M1077.7 468.90000000000003 H1083.3 L1080.5 465.90000000000003 Z" fill="#111"/><path d="M1077.7 475.09999999999997 H1083.3 L1080.5 478.09999999999997 Z" fill="#111"/><path d="M1077.7 517.0 H1083.3 L1080.5 514.0 Z" fill="#111"/><path d="M1077.7 523.1999999999999 H1083.3 L1080.5 526.1999999999999 Z" fill="#8a8a8a"/></svg>
<div class="a" style="left:1104px;top:618.2px;width:29.2px;height:29.2px;border-radius:50%;background:#e43434;box-shadow:0 2px 5px rgba(0,0,0,.3)"></div>
<div class="t" style="left:1114.80px;top:625.30px;font-size:15px;color:#fff;letter-spacing:0.000px;">1</div>
</body></html>
